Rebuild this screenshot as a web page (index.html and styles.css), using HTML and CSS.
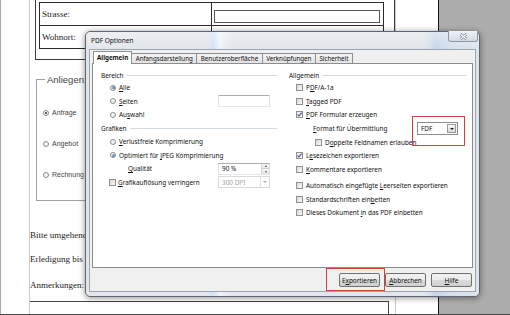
FILE: index.html
```html
<!DOCTYPE html>
<html lang="de">
<head>
    <meta charset="UTF-8">
    <title>PDF Optionen</title>
    <link rel="stylesheet" href="styles.css">
</head>
<body>
    <!-- Dokument im Hintergrund -->
    <div class="desk">
        <div class="page">
            <div class="sheet">
                <div class="frame">
                    <table class="addr">
                        <tr><td class="lbl">Strasse:</td><td class="fld"><div></div></td></tr>
                        <tr><td class="lbl">Wohnort:</td><td class="fld"><div></div></td></tr>
                    </table>
                </div>

                <fieldset class="anliegen">
                    <legend>Anliegen:</legend>
                    <div class="opt"><span class="dot on"></span>Anfrage</div>
                    <div class="opt"><span class="dot"></span>Angebot</div>
                    <div class="opt"><span class="dot"></span>Rechnung</div>
                </fieldset>

                <div class="notes">
                    <p>Bitte umgehend</p>
                    <p>Erledigung bis :</p>
                    <p class="last">Anmerkungen:</p>
                </div>
                <div class="memo"></div>
            </div>
        </div>
        <div class="gray"></div>
    </div>

    <!-- Dialog -->
    <div class="dialog">
        <div class="titlebar">
            <span class="title">PDF Optionen</span>
            <span class="close">
                <svg width="9" height="7" viewBox="0 0 9 7">
                    <path d="M1.5 1 L7.5 6 M7.5 1 L1.5 6" stroke="#7a8592" stroke-width="2.4" fill="none"/>
                    <path d="M1.5 1 L7.5 6 M7.5 1 L1.5 6" stroke="#f7f9fb" stroke-width="1.1" fill="none"/>
                </svg>
            </span>
        </div>

        <div class="client">
            <div class="tabs">
                <span class="tab active">Allgemein</span>
                <span class="tab">Anfangsdarstellung</span>
                <span class="tab">Benutzeroberfläche</span>
                <span class="tab">Verknüpfungen</span>
                <span class="tab">Sicherheit</span>
            </div>

            <div class="panel">
                <div class="col left">
                    <div class="head first">Bereich</div>
                    <div class="row"><span class="rb on"></span><span><u>A</u>lle</span></div>
                    <div class="row"><span class="rb"></span><span><u>S</u>eiten</span><span class="field"></span></div>
                    <div class="row"><span class="rb"></span><span>Au<u>s</u>wahl</span></div>
                    <div class="head">Grafiken</div>
                    <div class="row"><span class="rb"></span><span><u>V</u>erlustfreie Komprimierung</span></div>
                    <div class="row"><span class="rb on"></span><span>Optimiert für <u>J</u>PEG Komprimierung</span></div>
                    <div class="row"><span class="sub"><u>Q</u>ualität</span>
                        <span class="field spin">90 %<span class="arrows"><i class="up"></i><i class="dn"></i></span></span>
                    </div>
                    <div class="row"><span class="cb cb-l"></span><span><u>G</u>rafikauflösung verringern</span>
                        <span class="field combo off">300 DPI<span class="drop"><i></i></span></span>
                    </div>
                </div>

                <div class="col right">
                    <div class="head">Allgemein</div>
                    <div class="row"><span class="cb"></span><span>P<u>D</u>F/A-1a</span></div>
                    <div class="row"><span class="cb"></span><span><u>T</u>agged PDF</span></div>
                    <div class="row"><span class="cb on"><svg width="5" height="5" viewBox="0 0 5 5"><path d="M0.5 2.6 L2 4 L4.6 0.6" stroke="#3b4f82" stroke-width="1.1" fill="none"/></svg></span><span><u>P</u>DF Formular erzeugen</span></div>
                    <div class="row"><span class="sub2"><u>F</u>ormat für Übermittlung</span>
                        <span class="fdf">FDF<span class="drop"><i></i></span></span>
                    </div>
                    <div class="row"><span class="cb cb-d"></span><span>D<u>o</u>ppelte Feldnamen erlauben</span></div>
                    <div class="row"><span class="cb on"><svg width="5" height="5" viewBox="0 0 5 5"><path d="M0.5 2.6 L2 4 L4.6 0.6" stroke="#3b4f82" stroke-width="1.1" fill="none"/></svg></span><span>L<u>e</u>sezeichen exportieren</span></div>
                    <div class="row"><span class="cb"></span><span><u>K</u>ommentare exportieren</span></div>
                    <div class="row gap"><span class="cb"></span><span>Automatisch eingefügte <u>L</u>eerseiten exportieren</span></div>
                    <div class="row"><span class="cb"></span><span>Standardschriften ein<u>b</u>etten</span></div>
                    <div class="row"><span class="cb"></span><span>Dieses Dokument <u>i</u>n das PDF einbetten</span></div>
                </div>
            </div>

            <div class="footer">
                <button class="btn">E<u>x</u>portieren</button>
                <button class="btn"><u>A</u>bbrechen</button>
                <button class="btn"><u>H</u>ilfe</button>
            </div>
        </div>

        <!-- rote Markierungen -->
        <div class="mark mark-fdf"></div>
        <div class="mark mark-export"></div>
    </div>
</body>
</html>
```

FILE: styles.css
```css
* {
    box-sizing: border-box;
}

body {
    margin: 0;
    width: 510px;
    height: 315px;
    overflow: hidden;
    position: relative;
    font-family: "Noto Sans", "DejaVu Sans", sans-serif;
}

/* ---------- document behind ---------- */

.desk {
    display: flex;
    height: 315px;
    background: #acacac;
    border-bottom: 1px solid #4a4a4a;
}

.page {
    width: 439px;
    height: 314px;
    background: #fff;
    border-left: 1px solid #a9a9a9;
    border-right: 1px solid #151515;
    padding: 0 42px 0 28px;
}

.gray {
    flex: 1;
}

.sheet {
    height: 100%;
    border-left: 1px solid #c9c9c9;
    border-right: 1px solid #c9c9c9;
    font-family: "Liberation Serif", serif;
    color: #222;
}

.frame {
    margin-left: 5px;
    height: 60px;
    border: 1px solid #3c3c3c;
    border-top: 0;
    padding: 2px 10px 0 3px;
}

.addr {
    width: 100%;
    border-collapse: collapse;
    font-size: 9px;
}

.addr td {
    border: 1px solid #2b2b2b;
    height: 23px;
    padding: 0;
}

.addr .lbl {
    width: 172px;
    padding-left: 2px;
}

.addr .fld div {
    margin: 6px 3px 2px 2px;
    height: 13px;
    border: 1px solid #555;
}

.anliegen {
    width: 200px;
    margin: 14px 0 0 6px;
    padding: 12px 0 10px 6px;
    border: 1px solid #a0a0a0;
    font-family: "Liberation Sans", Arial, sans-serif;
    color: #444;
}

.anliegen legend {
    font-size: 9.5px;
    line-height: 11px;
    padding: 0 2px;
    margin-left: 2px;
}

.opt {
    height: 31px;
    display: flex;
    align-items: center;
    gap: 3px;
    font-size: 7px;
}

.dot {
    width: 6px;
    height: 6px;
    border-radius: 50%;
    border: 1px solid #8a8a8a;
    background: #fafafa;
    display: flex;
    align-items: center;
    justify-content: center;
}

.dot.on::after {
    content: "";
    width: 2px;
    height: 2px;
    border-radius: 50%;
    background: #333;
}

.notes {
    margin-top: 28.5px;
    font-size: 9px;
    line-height: 11px;
}

.notes p {
    margin: 0 0 13px;
}

.notes p + p {
    margin-bottom: 15px;
}

.notes p.last {
    margin-bottom: 10.5px;
}

.memo {
    width: 359px;
    height: 16px;
    border-top: 1px solid #444;
    border-right: 1px solid #444;
}

/* ---------- dialog ---------- */

.dialog {
    position: absolute;
    left: 85px;
    top: 31px;
    width: 395px;
    height: 266px;
    padding: 0 3px 4px;
    border: 1px solid #5d6670;
    border-radius: 5px;
    background:
        linear-gradient(to bottom, rgba(255,255,255,0.35), rgba(255,255,255,0) 18px),
        linear-gradient(to right, #e2e6eb 0, #e2e6eb 31%, #cfe3f4 32.5%, #f0f5f9 34%, #e2e6eb 37%, #e2e6eb 86%, #c6d7e8 89%, #d6e0ea 93%, #dde4ec 100%);
    box-shadow: 0 1px 6px rgba(0, 0, 0, 0.45);
    font-size: 6.4px;
    color: #111;
}

.titlebar {
    height: 17px;
    display: flex;
    align-items: center;
    padding-left: 2px;
}

.title {
    font-size: 6.5px;
    color: #111;
}

.close {
    position: absolute;
    top: -1px;
    right: 1px;
    width: 30px;
    height: 11px;
    border: 1px solid #8b96a2;
    border-top: 0;
    border-radius: 0 0 3px 3px;
    background: linear-gradient(#eef2f6, #d3dbe4);
    display: flex;
    align-items: center;
    justify-content: center;
}

.client {
    height: 243px;
    border: 1px solid #9aa5b1;
    background: #f0f0f0;
    padding: 1px 2px 0;
    display: flex;
    flex-direction: column;
}

.tabs {
    display: flex;
    align-items: flex-end;
    height: 13px;
    margin-left: 1px;
    position: relative;
    z-index: 1;
}

.tab {
    height: 10px;
    margin-bottom: 1px;
    padding: 0 3.5px;
    border: 1px solid #8c8e94;
    border-bottom: 0;
    border-left: 0;
    background: linear-gradient(#f4f4f4, #e3e3e3);
    display: flex;
    align-items: center;
    white-space: nowrap;
    font-size: 6.2px;
}

.tab.active {
    height: 13px;
    margin-bottom: 0;
    border-left: 1px solid #8c8e94;
    background: #fff;
    font-weight: bold;
    padding: 0 3px 1px;
}

.panel {
    height: 205px;
    margin-top: -1px;
    background: #fff;
    border: 1px solid #8c8e94;
    display: grid;
    grid-template-columns: 177px 1fr;
    column-gap: 11px;
    padding: 0 6px 0 7px;
}

.col.left {
    padding-top: 6.5px;
}

.col.right {
    padding-top: 5px;
}

.head {
    height: 12px;
    display: flex;
    align-items: center;
    padding-left: 1px;
}

.left .head {
    height: 13.5px;
}

.left .head.first {
    height: 10.5px;
}

.head::after {
    content: "";
    flex: 1;
    border-top: 1px solid #d3dbe3;
    margin-left: 3px;
}

.row {
    height: 13.6px;
    display: flex;
    align-items: center;
    white-space: nowrap;
}

.left .row {
    height: 13.5px;
}

.row.gap {
    margin-top: 2.5px;
}

.rb {
    width: 6px;
    height: 6px;
    margin: 0 3px 0 10px;
    border-radius: 50%;
    border: 1px solid #8e8f8f;
    background: radial-gradient(circle at 40% 35%, #fff, #dedede);
    display: flex;
    align-items: center;
    justify-content: center;
    flex: none;
}

.rb.on::after {
    content: "";
    width: 3px;
    height: 3px;
    border-radius: 50%;
    background: radial-gradient(circle at 35% 35%, #8fb4de, #2f5d8f);
}

.cb {
    width: 7px;
    height: 7px;
    margin: 0 3px 0 8px;
    border: 1px solid #8e8f8f;
    background: linear-gradient(135deg, #d8d8d8, #f8f8f8);
    display: flex;
    align-items: center;
    justify-content: center;
    flex: none;
}

.cb.on {
    background: linear-gradient(135deg, #eaeaea, #fdfdfd);
}

.cb.cb-l {
    margin: 0 2px 0 9px;
}

.cb.cb-d {
    margin-left: 27px;
}

.sub {
    padding-left: 28px;
}

.sub2 {
    padding-left: 25px;
}

.field {
    margin-left: auto;
    margin-right: 7px;
    width: 52px;
    height: 12px;
    flex: none;
    border: 1px solid #abadb3;
    border-color: #abadb3 #dbdfe6 #e3e9ef #e2e3ea;
    background: #fff;
    display: flex;
    align-items: center;
    padding-left: 3px;
    position: relative;
}

.spin .arrows {
    position: absolute;
    right: 0;
    top: 0;
    bottom: 0;
    width: 8px;
    border-left: 1px solid #d6d6d6;
    display: flex;
    flex-direction: column;
}

.spin .arrows i {
    flex: 1;
    display: flex;
    align-items: center;
    justify-content: center;
    background: linear-gradient(#f6f6f6, #e6e6e6);
}

.spin .arrows i + i {
    border-top: 1px solid #d0d0d0;
}

.spin .up::after {
    content: "";
    border: 1.5px solid transparent;
    border-bottom: 2px solid #555;
    border-top: 0;
}

.spin .dn::after {
    content: "";
    border: 1.5px solid transparent;
    border-top: 2px solid #555;
    border-bottom: 0;
}

.combo.off {
    color: #a2a2a2;
    border-color: #d9d9d9;
}

.drop {
    position: absolute;
    right: 0;
    top: 0;
    bottom: 0;
    width: 9px;
    display: flex;
    align-items: center;
    justify-content: center;
    border-left: 1px solid #e0e0e0;
}

.drop i {
    border: 2px solid transparent;
    border-top: 2.5px solid #b0b0b0;
    border-bottom: 0;
}

.fdf {
    margin-left: auto;
    margin-right: 8px;
    width: 41px;
    height: 13px;
    flex: none;
    border: 1px solid #8d8d8d;
    background: #fff;
    display: flex;
    align-items: center;
    padding-left: 3px;
    position: relative;
}

.fdf .drop {
    top: 1px;
    bottom: 1px;
    right: 1px;
    width: 9px;
    border: 1px solid #9a9a9a;
    background: linear-gradient(#f7f7f7, #dcdcdc);
}

.fdf .drop i {
    border-top-color: #222;
}

.footer {
    height: 23px;
    display: flex;
    justify-content: flex-end;
    align-items: flex-start;
    gap: 5px;
    padding: 5px 1px 0 0;
}

.btn {
    width: 41px;
    height: 14px;
    padding: 0;
    border: 1px solid #707070;
    border-radius: 2px;
    background: linear-gradient(#f2f2f2 0, #ebebeb 50%, #dddddd 50%, #cfcfcf 100%);
    font-family: inherit;
    font-size: 6.4px;
    color: #111;
}

.mark {
    position: absolute;
    border: 1px solid #d3403f;
}

.mark-fdf {
    left: 326px;
    top: 84px;
    width: 53px;
    height: 30px;
}

.mark-export {
    left: 240px;
    top: 236px;
    width: 59px;
    height: 23px;
}
```
